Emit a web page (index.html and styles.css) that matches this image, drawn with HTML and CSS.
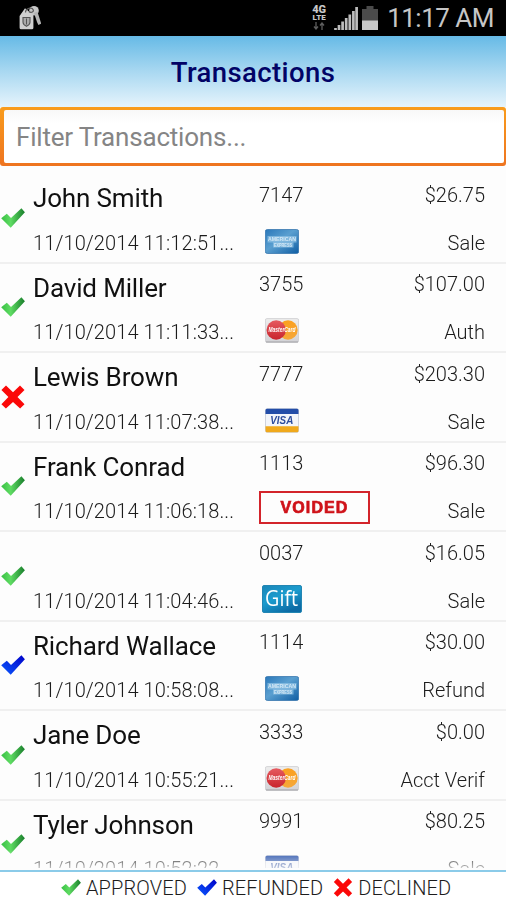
FILE: index.html
```html
<!DOCTYPE html>
<html lang="en">
<head>
    <meta charset="UTF-8">
    <meta name="viewport" content="width=device-width, initial-scale=1.0">
    <title>Transactions</title>
    <link rel="stylesheet" href="styles.css">
</head>
<body>

<!-- Shared icons -->
<svg class="sprite" width="0" height="0" aria-hidden="true">
    <defs>
        <linearGradient id="greenFill" x1="0" y1="0" x2="1" y2="0">
            <stop offset="0" stop-color="#38c044"/>
            <stop offset="0.4" stop-color="#5fdc63"/>
            <stop offset="1" stop-color="#187d2b"/>
        </linearGradient>
        <linearGradient id="blueFill" x1="0" y1="1" x2="1" y2="0">
            <stop offset="0" stop-color="#0b5bff"/>
            <stop offset="1" stop-color="#0000c8"/>
        </linearGradient>
        <linearGradient id="amexFill" x1="0" y1="0" x2="1" y2="1">
            <stop offset="0" stop-color="#2a78ba"/>
            <stop offset="0.45" stop-color="#5a9fd0"/>
            <stop offset="1" stop-color="#0f5da3"/>
        </linearGradient>
        <linearGradient id="giftFill" x1="0" y1="0" x2="0.6" y2="1">
            <stop offset="0" stop-color="#1a86b8"/>
            <stop offset="0.5" stop-color="#1c9cce"/>
            <stop offset="1" stop-color="#0c6ba5"/>
        </linearGradient>
        <linearGradient id="mcFill" x1="0" y1="0" x2="0" y2="1">
            <stop offset="0" stop-color="#eeeeee"/>
            <stop offset="1" stop-color="#d2d2d6"/>
        </linearGradient>
        <linearGradient id="redCircle" x1="0" y1="0" x2="0" y2="1">
            <stop offset="0" stop-color="#e65a60"/>
            <stop offset="1" stop-color="#c9252d"/>
        </linearGradient>
        <linearGradient id="orangeCircle" x1="0" y1="0" x2="0" y2="1">
            <stop offset="0" stop-color="#fba01f"/>
            <stop offset="1" stop-color="#f5a83a"/>
        </linearGradient>
    </defs>
    <symbol id="check" viewBox="0 0 24 20">
        <path d="M.2 10.2 5.8 5.8l4.2 4.2L20.4.2l3.5 4.1L9.7 19.8z"/>
    </symbol>
    <symbol id="cross" viewBox="0 0 24 24">
        <path d="M5 .4 12 7.2 19 .4l4.5 4.5-7 7.1 7 7.2-4.4 4.4L12 16.9l-7.1 6.7L.4 19.2l7-7.2L.4 4.9z" fill="#fb0808"/>
    </symbol>
    <symbol id="amex" viewBox="0 0 34 25">
        <rect x=".3" y=".5" width="33.4" height="24" rx="2" fill="url(#amexFill)" stroke="#2d6fa9" stroke-width=".7"/>
        <path d="M2.5 7h29v6.5h-3v5H8v-5H2.5z" fill="#8fc2e4" opacity=".75"/>
    </symbol>
    <symbol id="mastercard" viewBox="0 0 34 25">
        <rect x=".4" y=".6" width="33.2" height="23.6" rx="1.5" fill="url(#mcFill)" stroke="#c6c6ca" stroke-width=".7"/>
        <path d="M1 24h32" stroke="#a2a2a6"/>
        <circle cx="23" cy="12" r="9.7" fill="url(#orangeCircle)"/>
        <circle cx="11.2" cy="12" r="9.7" fill="url(#redCircle)"/>
    </symbol>
    <symbol id="visa" viewBox="0 0 34 25">
        <rect x=".5" y=".7" width="33" height="23.6" rx="1.5" fill="#f3f5fa" stroke="#b2b9ca" stroke-width=".6"/>
        <path d="M.5 6V2.2A1.5 1.5 0 0 1 2 .7h30a1.5 1.5 0 0 1 1.5 1.5V6z" fill="#234da8"/>
        <path d="M.5 18.3h33v4.5a1.5 1.5 0 0 1-1.5 1.5H2a1.5 1.5 0 0 1-1.5-1.5z" fill="#f0a91c"/>
    </symbol>
    <symbol id="gift" viewBox="0 0 40 28">
        <rect x=".5" y=".5" width="39" height="27" rx="1.5" fill="url(#giftFill)" stroke="#2386b3"/>
    </symbol>
</svg>

<div class="status-bar">
    <svg class="keys" width="22" height="26" viewBox="0 0 22 26">
        <circle cx="15" cy="5.7" r="4.8" fill="#c6c6c6"/>
        <path d="m15 8 3.5-1.3 3.7 12-2.8 1.4-1.4-3z" fill="#b5b5b5"/>
        <path d="M.6 11 6 3.2l8.4 7v12.5a1.5 1.5 0 0 1-1.5 1.5H2.1a1.5 1.5 0 0 1-1.5-1.5z" fill="#cfcfcf"/>
        <path d="M6.5 7.5c0-4 6.5-6 7.8-2.5.8 2.4-3 3-4.3 1.5" fill="none" stroke="#5b5b5b" stroke-width="1.2"/>
        <path d="M4 12.5h7v4.8c0 2-1.7 3.2-3.5 4-1.8-.8-3.5-2-3.5-4z" fill="#a9a9a9" stroke="#555" stroke-width="1.1"/>
        <path d="M7.5 13.5v6" stroke="#555"/>
    </svg>
    <div class="status-right">
        <div class="network">
            <span>4G</span>
            <span class="lte">LTE</span>
            <svg width="12" height="8" viewBox="0 0 12 8">
                <path d="M3 0v7M1 4.5 3 7l2-2.5M9 8V1M7 3.5 9 1l2 2.5" stroke="#5e5e5e" stroke-width="1.3" fill="none"/>
            </svg>
        </div>
        <svg class="signal" width="24" height="24" viewBox="0 0 24 24">
            <path d="M1.5 24v-2M5 24v-5M8.6 24v-8.4M12.2 24V12M15.8 24V8.5M19.4 24V5M22.6 24V1" stroke="#bdbdbd" stroke-width="2.7"/>
        </svg>
        <svg class="battery" width="16" height="24" viewBox="0 0 16 24">
            <path d="M0 3h4.5V0h7v3H16v12H0z" fill="#4b4b4b"/>
            <path d="M0 14.5h16V24H0z" fill="#c8c8c8"/>
        </svg>
        <span class="clock">11:17 AM</span>
    </div>
</div>

<div class="header">
    <h1>Transactions</h1>
</div>

<div class="filter">
    <input type="text" placeholder="Filter Transactions...">
</div>

<div class="list">
    <div class="row">
        <svg class="status check green"><use href="#check"/></svg>
        <div class="who"><div class="name">John Smith</div><div class="date">11/10/2014 11:12:51...</div></div>
        <div class="card">
            <div class="last4">7147</div>
            <svg class="card-icon amex" viewBox="0 0 34 25">
                <use href="#amex"/>
                <text x="17" y="12.2" textLength="28" lengthAdjust="spacingAndGlyphs">AMERICAN</text>
                <text x="18" y="18" textLength="18" lengthAdjust="spacingAndGlyphs">EXPRESS</text>
            </svg>
        </div>
        <div class="amount"><div>$26.75</div><div class="type">Sale</div></div>
    </div>
    <div class="row">
        <svg class="status check green"><use href="#check"/></svg>
        <div class="who"><div class="name">David Miller</div><div class="date">11/10/2014 11:11:33...</div></div>
        <div class="card">
            <div class="last4">3755</div>
            <svg class="card-icon mastercard" viewBox="0 0 34 25">
                <use href="#mastercard"/>
                <text x="17" y="14.4" textLength="27" lengthAdjust="spacingAndGlyphs">MasterCard</text>
            </svg>
        </div>
        <div class="amount"><div>$107.00</div><div class="type">Auth</div></div>
    </div>
    <div class="row">
        <svg class="status cross"><use href="#cross"/></svg>
        <div class="who"><div class="name">Lewis Brown</div><div class="date">11/10/2014 11:07:38...</div></div>
        <div class="card">
            <div class="last4">7777</div>
            <svg class="card-icon visa" viewBox="0 0 34 25">
                <use href="#visa"/>
                <text x="16.8" y="16.2" textLength="23" lengthAdjust="spacingAndGlyphs">VISA</text>
            </svg>
        </div>
        <div class="amount"><div>$203.30</div><div class="type">Sale</div></div>
    </div>
    <div class="row">
        <svg class="status check green"><use href="#check"/></svg>
        <div class="who"><div class="name">Frank Conrad</div><div class="date">11/10/2014 11:06:18...</div></div>
        <div class="card"><div class="last4">1113</div><div class="voided">VOIDED</div></div>
        <div class="amount"><div>$96.30</div><div class="type">Sale</div></div>
    </div>
    <div class="row">
        <svg class="status check green"><use href="#check"/></svg>
        <div class="who"><div class="name"></div><div class="date">11/10/2014 11:04:46...</div></div>
        <div class="card">
            <div class="last4">0037</div>
            <svg class="card-icon gift" viewBox="0 0 40 28">
                <use href="#gift"/>
                <text x="19.6" y="21" textLength="33" lengthAdjust="spacingAndGlyphs">Gift</text>
            </svg>
        </div>
        <div class="amount"><div>$16.05</div><div class="type">Sale</div></div>
    </div>
    <div class="row">
        <svg class="status check blue"><use href="#check"/></svg>
        <div class="who"><div class="name">Richard Wallace</div><div class="date">11/10/2014 10:58:08...</div></div>
        <div class="card">
            <div class="last4">1114</div>
            <svg class="card-icon amex" viewBox="0 0 34 25">
                <use href="#amex"/>
                <text x="17" y="12.2" textLength="28" lengthAdjust="spacingAndGlyphs">AMERICAN</text>
                <text x="18" y="18" textLength="18" lengthAdjust="spacingAndGlyphs">EXPRESS</text>
            </svg>
        </div>
        <div class="amount"><div>$30.00</div><div class="type">Refund</div></div>
    </div>
    <div class="row">
        <svg class="status check green"><use href="#check"/></svg>
        <div class="who"><div class="name">Jane Doe</div><div class="date">11/10/2014 10:55:21...</div></div>
        <div class="card">
            <div class="last4">3333</div>
            <svg class="card-icon mastercard" viewBox="0 0 34 25">
                <use href="#mastercard"/>
                <text x="17" y="14.4" textLength="27" lengthAdjust="spacingAndGlyphs">MasterCard</text>
            </svg>
        </div>
        <div class="amount"><div>$0.00</div><div class="type">Acct Verif</div></div>
    </div>
    <div class="row">
        <svg class="status check green"><use href="#check"/></svg>
        <div class="who"><div class="name">Tyler Johnson</div><div class="date">11/10/2014 10:52:22...</div></div>
        <div class="card">
            <div class="last4">9991</div>
            <svg class="card-icon visa" viewBox="0 0 34 25">
                <use href="#visa"/>
                <text x="16.8" y="16.2" textLength="23" lengthAdjust="spacingAndGlyphs">VISA</text>
            </svg>
        </div>
        <div class="amount"><div>$80.25</div><div class="type">Sale</div></div>
    </div>
</div>

<div class="legend">
    <svg class="legend-icon green"><use href="#check"/></svg><span>APPROVED</span>
    <svg class="legend-icon blue"><use href="#check"/></svg><span>REFUNDED</span>
    <svg class="legend-icon"><use href="#cross"/></svg><span>DECLINED</span>
</div>

</body>
</html>
```
FILE: styles.css
```css
* {
    box-sizing: border-box;
}

body {
    margin: 0;
    height: 900px;
    display: flex;
    flex-direction: column;
    overflow: hidden;
    background-color: #fdfdfd;
    font-family: Roboto, sans-serif;
    color: #1c1c1c;
}

.sprite {
    position: absolute;
}

.status-bar {
    height: 36px;
    flex: none;
    display: flex;
    justify-content: space-between;
    align-items: flex-start;
    padding: 5px 12px 0 19px;
    background-color: #000;
}

.status-right {
    display: flex;
    align-items: flex-start;
}

.network {
    width: 16px;
    display: flex;
    flex-direction: column;
    align-items: center;
    color: #c6c6c6;
    font-size: 11px;
    font-weight: 900;
    line-height: 9px;
}

.network .lte {
    font-size: 8px;
    line-height: 8px;
}

.signal {
    margin: 1px 0 0 7px;
}

.battery {
    margin: 1px 9px 0 4px;
}

.clock {
    color: #c6c6c6;
    font-size: 26px;
    line-height: 26px;
    letter-spacing: -0.5px;
}

.header {
    height: 71px;
    flex: none;
    display: flex;
    justify-content: center;
    background: linear-gradient(#66bae6, #a9d8f1 50%, #e6f4fc);
}

h1 {
    margin: 0;
    font-size: 27.5px;
    font-weight: 500;
    line-height: 73px;
    letter-spacing: 0.4px;
    color: #020366;
}

/* orange focus frame */
.filter {
    height: 59px;
    flex: none;
    padding: 3px 2px 3px 4px;
    border-radius: 3px;
    background: linear-gradient(#f99c1c, #ee7420);
}

.filter input {
    display: block;
    width: 100%;
    height: 53px;
    padding: 0 12px;
    border: none;
    border-radius: 2px;
    background: linear-gradient(#f8f8f8, #fff 14px);
    font-family: inherit;
    font-size: 26px;
    letter-spacing: -0.2px;
}

.filter input::placeholder {
    color: #858585;
}

.list {
    height: 704px;
    flex: none;
    padding-top: 8px;
    overflow: hidden;
    -webkit-mask-image: linear-gradient(#000 684px, rgba(0, 0, 0, 0.3) 702px, transparent 702px);
    mask-image: linear-gradient(#000 684px, rgba(0, 0, 0, 0.3) 702px, transparent 702px);
}

.row {
    height: 89.5px;
    display: flex;
    padding: 8.5px 21px 0 0;
    border-bottom: 2px solid #f0f0f0;
    font-size: 20px;
    line-height: 24px;
    font-weight: 300;
}

.status {
    width: 24px;
    height: 20px;
    flex: none;
    margin: 25px 8px 0 1px;
}

.status.cross {
    height: 24px;
    margin-top: 23px;
}

.green {
    fill: url(#greenFill);
}

.blue {
    fill: url(#blueFill);
}

.who {
    width: 226px;
    flex: none;
    white-space: nowrap;
}

.name {
    height: 48px;
    padding-top: 0.5px;
    font-size: 26px;
    font-weight: 400;
    line-height: 31px;
    letter-spacing: -0.15px;
    color: #111;
}

.date {
    letter-spacing: 0.1px;
}

.card {
    width: 112px;
    flex: none;
}

.card-icon {
    display: block;
    width: 34px;
    height: 25px;
    margin: 22px 0 0 6px;
}

.card-icon text {
    font-family: "Liberation Sans", sans-serif;
    font-weight: bold;
    text-anchor: middle;
    fill: #fff;
}

.amex text {
    font-size: 5px;
    fill: #d5e9f6;
}

.mastercard text {
    font-size: 6.5px;
    font-style: italic;
}

.visa text {
    font-size: 10.5px;
    font-style: italic;
    fill: #2d4d9d;
}

.card-icon.gift {
    width: 40px;
    height: 28px;
    margin: 20.5px 0 0 3px;
}

.card-icon.gift text {
    font-family: "Open Sans", sans-serif;
    font-size: 21px;
    font-weight: 500;
}

.voided {
    width: 111px;
    height: 33px;
    margin-top: 16px;
    border: 2px solid #d3242b;
    color: #cf1219;
    font-family: "Liberation Sans", sans-serif;
    font-size: 16px;
    font-weight: bold;
    letter-spacing: 1.1px;
    line-height: 29px;
    text-align: center;
    -webkit-text-stroke: 0.7px #cf1219;
}

.amount {
    flex: 1;
    text-align: right;
    white-space: nowrap;
}

.type {
    margin-top: 24px;
}

.legend {
    flex: 1;
    display: flex;
    align-items: center;
    padding: 3px 0 0 61px;
    border-top: 2px solid #8bcbe9;
    background-color: #fff;
    font-size: 20px;
    font-weight: 300;
    letter-spacing: 0.12px;
}

.legend span {
    margin: 0 10px 0 5px;
}

.legend-icon {
    width: 20px;
    height: 19px;
}
```
